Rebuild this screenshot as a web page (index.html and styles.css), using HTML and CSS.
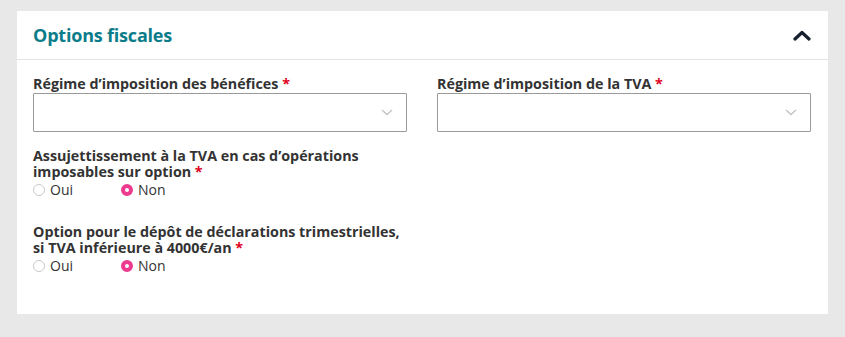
FILE: index.html
```html
<!DOCTYPE html>
<html>
<head>
    <link rel="stylesheet" href="styles.css">
</head>
<body>
    <div class="card">
        <div class="card-header">
            <h2 class="card-title">Options fiscales</h2>
            <svg class="toggle" width="18" height="11" viewBox="0 0 18 11">
                <path d="M2 9 L9 2.5 L16 9" fill="none" stroke="#17202e" stroke-width="3.2" stroke-linecap="round" stroke-linejoin="round"/>
            </svg>
        </div>
        <div class="card-body">
            <div class="row">
                <div class="field">
                    <label class="label">Régime d’imposition des bénéfices <span class="req">*</span></label>
                    <div class="select">
                        <svg width="12" height="7" viewBox="0 0 12 7">
                            <path d="M1 1 L6 5.5 L11 1" fill="none" stroke="#c4c4c4" stroke-width="1.4"/>
                        </svg>
                    </div>
                </div>
                <div class="field">
                    <label class="label">Régime d’imposition de la TVA <span class="req">*</span></label>
                    <div class="select">
                        <svg width="12" height="7" viewBox="0 0 12 7">
                            <path d="M1 1 L6 5.5 L11 1" fill="none" stroke="#c4c4c4" stroke-width="1.4"/>
                        </svg>
                    </div>
                </div>
            </div>

            <div class="field group">
                <label class="label">Assujettissement à la TVA en cas d’opérations imposables sur option <span class="req">*</span></label>
                <div class="radios">
                    <span class="radio"><span class="dot"></span>Oui</span>
                    <span class="radio checked"><span class="dot"></span>Non</span>
                </div>
            </div>

            <div class="field group">
                <label class="label">Option pour le dépôt de déclarations trimestrielles, si TVA inférieure à 4000€/an <span class="req">*</span></label>
                <div class="radios">
                    <span class="radio"><span class="dot"></span>Oui</span>
                    <span class="radio checked"><span class="dot"></span>Non</span>
                </div>
            </div>
        </div>
    </div>
</body>
</html>
```

FILE: styles.css
```css
body {
    margin: 0;
    padding: 11px 17px 0;
    background-color: #e8e8e8;
    font-family: "Open Sans", Arial, sans-serif;
    color: #333;
}

.card {
    width: 811px;
    height: 303px;
    background-color: #fff;
}

.card-header {
    display: flex;
    align-items: center;
    justify-content: space-between;
    height: 48px;
    padding: 0 17px 0 16px;
    border-bottom: 1px solid #e4e4e4;
}

.card-title {
    margin: 0;
    font-size: 18px;
    font-weight: 700;
    color: #0b7d8a;
    letter-spacing: -0.2px;
}

.card-body {
    padding: 16px 17px 0 16px;
}

.row {
    display: grid;
    grid-template-columns: 374px 374px;
    column-gap: 30px;
}

.field {
    display: flex;
    flex-direction: column;
    width: 374px;
}

.label {
    font-size: 14.3px;
    font-weight: 700;
    line-height: 16px;
    color: #333;
}

.req {
    color: #e0001b;
}

.select {
    box-sizing: border-box;
    display: flex;
    align-items: center;
    justify-content: flex-end;
    height: 39px;
    margin-top: 1px;
    padding-right: 13px;
    border: 1px solid #9a9a9a;
    border-radius: 1px;
}

.group {
    margin-top: 16px;
}

.group + .group {
    margin-top: 26px;
}

.radios {
    display: flex;
    margin-top: 2px;
}

.radio {
    display: flex;
    align-items: center;
    width: 88px;
    font-size: 14px;
    line-height: 16px;
    color: #333;
}

.dot {
    box-sizing: border-box;
    width: 12px;
    height: 12px;
    margin-right: 5px;
    border: 1px solid #c9c9c9;
    border-radius: 50%;
}

.checked .dot {
    border: 4px solid #ec3a8e;
    background-color: #fff;
}
```
